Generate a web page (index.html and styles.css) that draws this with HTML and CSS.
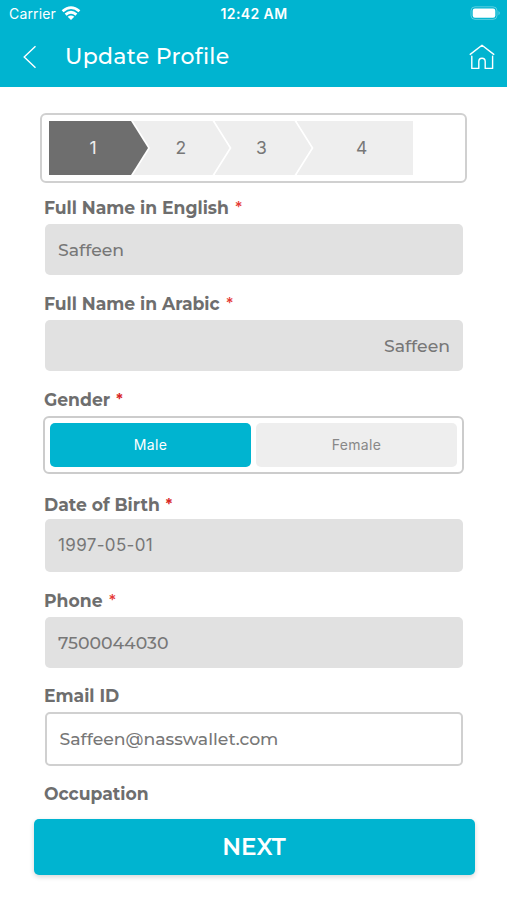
FILE: index.html
```html
<!DOCTYPE html>
<html lang="en">
<head>
<meta charset="utf-8">
<meta name="viewport" content="width=device-width, initial-scale=1">
<title>Update Profile</title>
<link rel="stylesheet" href="styles.css">
</head>
<body>
<header class="header">
  <div class="status">
    <div class="carrier"><span class="carrier-name">Carrier</span>
      <svg class="wifi" width="20" height="15" viewBox="0 0 20 15" fill="none" stroke="#fff" stroke-width="2.8"><path d="M1.6 5.2Q10-2 18.4 5.2M4.6 8.6Q10 4 15.4 8.6"/><path d="M6.7 10.7Q10 8.2 13.3 10.7L10 14Z" fill="#fff" stroke="none"/></svg>
    </div>
    <time class="clock">12:42 AM</time>
    <svg class="battery" width="31" height="15" viewBox="0 0 31 15"><rect x="1" y=".8" width="26" height="12.6" rx="4" fill="none" stroke="#fff" stroke-opacity=".35"/><rect x="2.7" y="2.5" width="22.6" height="9.2" rx="2.2" fill="#fff"/><path d="M28.6 5Q30.6 7.1 28.6 9.2Z" fill="#fff" fill-opacity=".5"/></svg>
  </div>
  <nav class="navbar">
    <svg class="back" width="14" height="24" viewBox="0 0 14 24" fill="none" stroke="#fff" stroke-width="1.4"><path d="M12.5 1.2 1.2 12 12.5 22.8"/></svg>
    <h1 class="title">Update Profile</h1>
    <svg class="home" width="26" height="26" viewBox="0 0 26 26" fill="none" stroke="#fff" stroke-width="1.4" stroke-linecap="round" stroke-linejoin="round"><path d="M1.2 10.4 13 1.2 24.8 10.4M2.8 12.2V24.4H9.8V17.6Q9.8 14.2 13 14.2T16.2 17.6V24.4H23.6V12.2"/></svg>
  </nav>
</header>
<main class="form">
  <div class="stepper">
    <div class="step step-first">1</div>
    <div class="step step-second">2</div>
    <div class="step step-third">3</div>
    <div class="step step-last">4</div>
  </div>
  <div class="field name-field"><div class="label"><span>Full Name in English</span><b class="required">*</b></div><div class="input">Saffeen</div></div>
  <div class="field name-field"><div class="label"><span>Full Name in Arabic</span><b class="required">*</b></div><div class="input input-right">Saffeen</div></div>
  <div class="field gender-field"><div class="label"><span>Gender</span><b class="required strong">*</b></div>
    <div class="segments"><div class="segment selected">Male</div><div class="segment">Female</div></div>
  </div>
  <div class="field birth-field"><div class="label"><span>Date of Birth</span><b class="required strong">*</b></div><div class="input tall date">1997-05-01</div></div>
  <div class="field phone-field"><div class="label"><span>Phone</span><b class="required">*</b></div><div class="input">7500044030</div></div>
  <div class="field email-field"><div class="label"><span>Email ID</span></div><div class="input tall editable">Saffeen@nasswallet.com</div></div>
  <div class="label">Occupation</div>
</main>
<button class="next" type="button">NEXT</button>
</body>
</html>
```
FILE: styles.css
```css
* { box-sizing: border-box; }
body {
  margin: 0;
  height: 900px;
  overflow: hidden;
  background: #fff;
  color: #6e6e6e;
  font-family: Montserrat, Inter, sans-serif;
}
.header { height: 87px; background: #00b4d0; color: #fff; }
.status {
  display: grid;
  grid-template-columns: 1fr auto 1fr;
  align-items: center;
  height: 28px;
  padding: 0 6px 0 9px;
  font: 14px/28px Inter, sans-serif;
}
.carrier { display: flex; align-items: center; gap: 5px; }
.carrier-name { letter-spacing: .15px; }
.wifi { margin-top: -2px; }
.clock { margin-right: 2px; font-weight: 600; font-size: 14px; letter-spacing: .4px; }
.battery { justify-self: end; margin-top: -1px; }
.navbar {
  display: flex;
  align-items: center;
  height: 57px;
  padding: 0 12px 0 23px;
}
.title { margin: 0 auto 0 28px; font-size: 22px; font-weight: 500; letter-spacing: .3px; line-height: 28px; }
.form { height: 732px; padding: 26px 44px 0; }
.stepper {
  display: flex;
  width: 427px;
  height: 70px;
  margin: 0 0 10px -4px;
  padding: 6px 7px;
  border: 2px solid #d0d0d0;
  border-radius: 6px;
}
.step {
  display: flex;
  align-items: center;
  justify-content: center;
  height: 54px;
  padding-bottom: 1px;
  background: #eee;
  color: #777;
  font: 17.5px Inter, sans-serif;
}
.step-first {
  width: 100px;
  padding-right: 12px;
  background: #6e6e6e;
  color: #eee;
  clip-path: polygon(0 0, 82px 0, 99px 50%, 82px 100%, 0 100%);
}
.step-second, .step-third {
  width: 97.5px;
  margin-left: -16px;
  padding-right: 2px;
  clip-path: polygon(0 0, calc(100% - 18px) 0, calc(100% - 1px) 50%, calc(100% - 18px) 100%, 0 100%, 17px 50%);
}
.step-third { width: 98px; padding-right: 4px; }
.step-last {
  width: 116.5px;
  margin-left: -16px;
  padding-left: 14px;
  clip-path: polygon(0 0, 100% 0, 100% 100%, 0 100%, 17px 50%);
}
.field { display: flex; flex-direction: column; }
.name-field { height: 95.75px; }
.gender-field { height: 105px; }
.birth-field { height: 96px; }
.phone-field { height: 95px; }
.email-field { height: 98px; }
.label {
  display: flex;
  align-items: center;
  gap: 6px;
  height: 31px;
  padding-bottom: 2px;
  font-size: 17.2px;
  font-weight: 700;
  line-height: 29px;
  white-space: nowrap;
}
.birth-field .label { height: 29px; padding: 0; }
.phone-field .label { padding-bottom: 1px; }
.required { margin-top: -2px; color: #e53935; font: 500 15px/29px Inter, sans-serif; }
.strong { margin-left: -1px; color: #d82525; font-weight: 700; }
.input {
  display: flex;
  align-items: center;
  height: 51px;
  margin-left: .5px;
  padding: 0 13px 0 13.5px;
  border-radius: 5px;
  background: #e1e1e1;
  color: #777;
  font-size: 17.3px;
  font-weight: 500;
}
.input-right { justify-content: flex-end; }
.tall { height: 54px; }
.date { height: 53px; font: 17px Inter, sans-serif; letter-spacing: .35px; }
.editable { padding: 0 13px; border: 2px solid #d0d0d0; background: #fff; }
.segments {
  display: flex;
  gap: 5px;
  width: 421px;
  height: 58px;
  margin-left: -1px;
  padding: 5px;
  border: 2px solid #ccc;
  border-radius: 6px;
}
.segment {
  display: flex;
  flex: 1;
  align-items: center;
  justify-content: center;
  border-radius: 5px;
  background: #eee;
  color: #888;
  font: 14px Inter, sans-serif;
  letter-spacing: .3px;
}
.selected { background: #00b4d0; color: #fff; }
.next {
  display: block;
  width: 441px;
  height: 56px;
  margin: 0 0 0 33.5px;
  padding: 0;
  border: 0;
  border-radius: 5px;
  background: #00b4d0;
  box-shadow: 0 2px 5px rgba(0, 0, 0, .16);
  color: #fff;
  font: 600 23.2px Montserrat, Inter, sans-serif;
}
```
